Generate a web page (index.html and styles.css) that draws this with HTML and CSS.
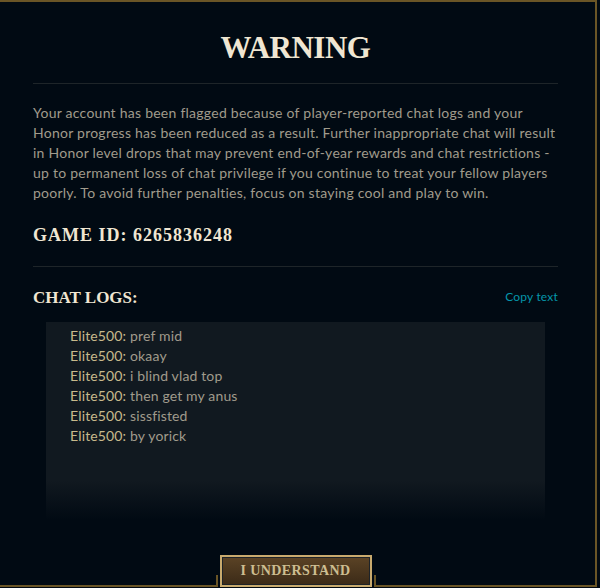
FILE: index.html
```html
<!DOCTYPE html>
<html>
<head>
<meta charset="utf-8">
<link rel="stylesheet" href="styles.css">
</head>
<body>
<div class="frame">
  <div class="content">
    <h1 class="title">WARNING</h1>
    <div class="divider"></div>
    <p class="message">Your account has been flagged because of player-reported chat logs and your Honor progress has been reduced as a result. Further inappropriate chat will result in Honor level drops that may prevent end-of-year rewards and chat restrictions - up to permanent loss of chat privilege if you continue to treat your fellow players poorly. To avoid further penalties, focus on staying cool and play to win.</p>
    <h2 class="heading game-id">GAME ID: 6265836248</h2>
    <div class="divider divider-2"></div>
    <div class="logs-header">
      <h2 class="heading logs-title">CHAT LOGS:</h2>
      <span class="copy">Copy text</span>
    </div>
    <div class="chat">
      <div class="line"><span class="name">Elite500:</span> pref mid</div>
      <div class="line"><span class="name">Elite500:</span> okaay</div>
      <div class="line"><span class="name">Elite500:</span> i blind vlad top</div>
      <div class="line"><span class="name">Elite500:</span> then get my anus</div>
      <div class="line"><span class="name">Elite500:</span> sissfisted</div>
      <div class="line"><span class="name">Elite500:</span> by yorick</div>
    </div>
    <div class="footer">
      <div class="btn-wrap">
        <button class="btn">I UNDERSTAND</button>
      </div>
    </div>
  </div>
</div>
</body>
</html>
```

FILE: styles.css
```css
html, body {
  margin: 0;
  padding: 0;
  background: #010a13;
  overflow: hidden;
}
body {
  width: 600px;
  height: 588px;
  font-family: Lato, "Liberation Sans", sans-serif;
}
.frame {
  width: 607px;
  height: 587px;
  margin-left: -10px;
  box-sizing: border-box;
  border: 2px solid #6a5526;
  background: #010a13;
}
.content {
  display: flex;
  flex-direction: column;
  height: 100%;
  padding: 28px 37px 0 41px;
  box-sizing: border-box;
}
.title {
  margin: 0;
  text-align: center;
  font-family: "Liberation Serif", serif;
  font-weight: bold;
  font-size: 31px;
  line-height: 36px;
  letter-spacing: -0.5px;
  color: #f0e6d2;
}
.divider {
  height: 1px;
  background: #1e2529;
  margin-top: 17px;
}
.message {
  margin: 19px 0 0;
  font-size: 14px;
  line-height: 20px;
  letter-spacing: 0.25px;
  color: #a09b8c;
}
.heading {
  margin: 0;
  font-family: "Liberation Serif", serif;
  font-weight: bold;
  font-size: 18px;
  line-height: 22px;
  color: #f0e6d2;
}
.game-id {
  margin-top: 21px;
  letter-spacing: 1px;
}
.logs-title {
  font-size: 17px;
}
.divider-2 {
  margin-top: 20px;
}
.logs-header {
  display: flex;
  justify-content: space-between;
  align-items: center;
  margin-top: 20px;
}
.copy {
  font-size: 12px;
  letter-spacing: 0.2px;
  color: #0596aa;
  margin-bottom: 3px;
}
.chat {
  margin: 13px 13px 0;
  padding: 4px 24px 0;
  height: 198px;
  box-sizing: border-box;
  background: linear-gradient(to bottom, #111920 0%, #111920 80%, #010a13 100%);
}
.line {
  font-size: 14px;
  line-height: 20px;
  letter-spacing: 0.15px;
  color: #a09b8c;
}
.name {
  color: #c8b98c;
}
.footer {
  margin-top: auto;
  display: flex;
  justify-content: center;
  margin-bottom: -2px;
}
.btn-wrap {
  padding: 0 4px;
  background:
    linear-gradient(#6a5526, #6a5526) left bottom / 2px 12px no-repeat,
    linear-gradient(#6a5526, #6a5526) right bottom / 2px 12px no-repeat,
    #010a13;
  display: flex;
}
.btn {
  width: 152px;
  height: 32px;
  margin: 0;
  padding: 0;
  border: 2px solid #c8aa6e;
  box-shadow: inset 0 0 0 1px #1e2328;
  background: linear-gradient(#5b4325, #3b2a17);
  font-family: "Liberation Serif", serif;
  font-weight: bold;
  font-size: 14px;
  letter-spacing: 0.4px;
  color: #cdbe91;
}
```
